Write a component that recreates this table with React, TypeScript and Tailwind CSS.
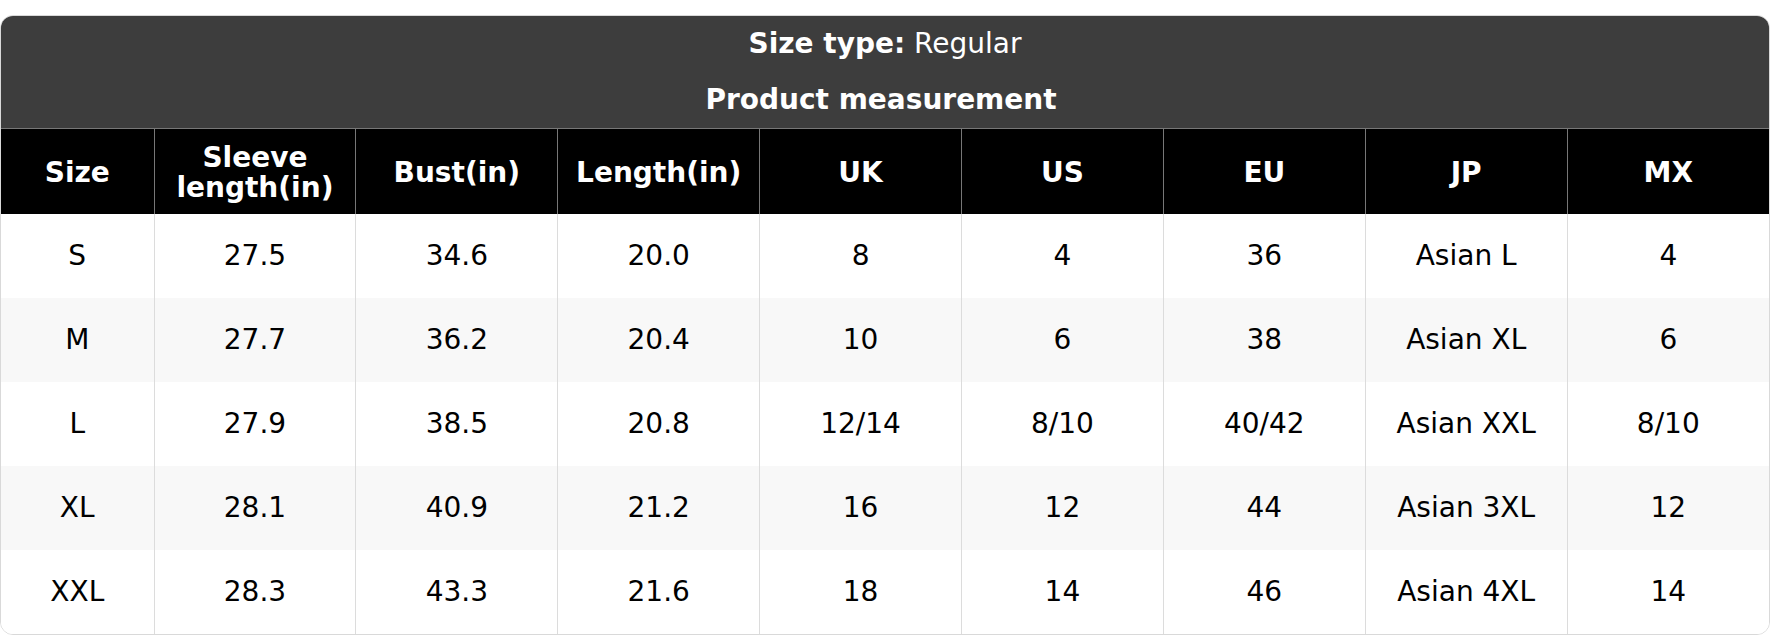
import React from "react";

const headers = ["Size", "Sleeve length(in)", "Bust(in)", "Length(in)", "UK", "US", "EU", "JP", "MX"];
const rows = [
  ["S", "27.5", "34.6", "20.0", "8", "4", "36", "Asian L", "4"],
  ["M", "27.7", "36.2", "20.4", "10", "6", "38", "Asian XL", "6"],
  ["L", "27.9", "38.5", "20.8", "12/14", "8/10", "40/42", "Asian XXL", "8/10"],
  ["XL", "28.1", "40.9", "21.2", "16", "12", "44", "Asian 3XL", "12"],
  ["XXL", "28.3", "43.3", "21.6", "18", "14", "46", "Asian 4XL", "14"],
];

export default function App() {
  return (
    <div className="w-[1770px] h-[636px] bg-white pt-[15px]" style={{ fontFamily: '"DejaVu Sans", sans-serif' }}>
      <div className="rounded-[13px] border border-[#d9d9d9] overflow-hidden">
        <div className="bg-[#3d3d3d] text-white text-center text-[28px] pt-[9px] pb-[9px]">
          <div className="leading-[38px]">
            <span className="font-bold">Size type:</span> Regular
          </div>
          <div className="leading-[38px] mt-[18px] font-bold pr-[8px]">Product measurement</div>
        </div>
        <table className="w-full table-fixed border-collapse text-[28px]">
          <colgroup>
            <col className="w-[153px]" />
            {headers.slice(1).map((h) => (
              <col key={h} />
            ))}
          </colgroup>
          <thead>
            <tr className="bg-black text-white h-[85px] border-t border-[#777]">
              {headers.map((h, i) => (
                <th
                  key={h}
                  className={`font-bold leading-[30px] text-center px-2 pt-[3px] ${i > 0 ? "border-l border-[#777]" : ""}`}
                >
                  {h === "Sleeve length(in)" ? (
                    <>
                      Sleeve
                      <br />
                      length(in)
                    </>
                  ) : (
                    h
                  )}
                </th>
              ))}
            </tr>
          </thead>
          <tbody>
            {rows.map((r, ri) => (
              <tr key={ri} className={`h-[84px] ${ri % 2 === 1 ? "bg-[#f8f8f8]" : "bg-white"}`}>
                {r.map((c, ci) => (
                  <td
                    key={ci}
                    className={`text-center text-black ${ci > 0 ? "border-l border-[#dcdcdc]" : ""}`}
                  >
                    {c}
                  </td>
                ))}
              </tr>
            ))}
          </tbody>
        </table>
      </div>
    </div>
  );
}
